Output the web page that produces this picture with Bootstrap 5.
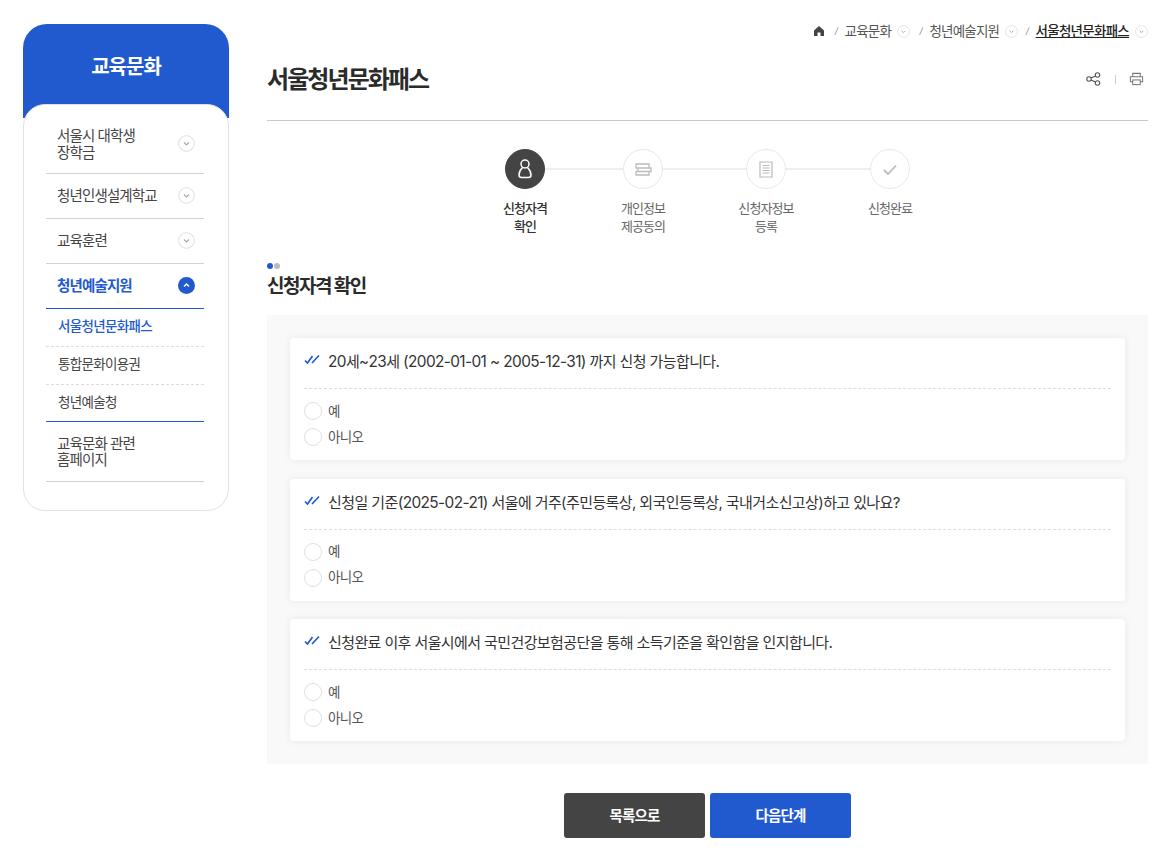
<!doctype html>
<html lang="ko"><head><meta charset="utf-8"><title>서울청년문화패스</title>
<link href="https://cdn.jsdelivr.net/npm/bootstrap@5.3.0/dist/css/bootstrap.min.css" rel="stylesheet">
<style>
html,body{height:849px;overflow:hidden}
body{font-family:Inter,"Noto Sans CJK KR","Noto Sans",sans-serif;color:#333;background:#fff;letter-spacing:-.05em;font-size:14px}
.shell{padding:24px 26px 0 23px;gap:38px}
.side{width:206px;flex:none}
.side-head{height:94px;background:#2159cf;border-radius:24px 24px 0 0;color:#fff;font-size:20px;font-weight:700;text-align:center;padding-top:27px;line-height:32px;letter-spacing:-.05em}
.side-panel{height:407px;margin-top:-14px;position:relative;background:#fff;border:1px solid #e2e2e2;border-radius:22px;padding:8px 24px 0 22px}
.mi{display:flex;justify-content:space-between;align-items:center;padding:0 9px 1px 11px;border-bottom:1px solid #d2d2d2;color:#444;font-size:14.5px;line-height:16.5px;height:45px;letter-spacing:-.06em}
.mi>span{padding-top:2px}
.mi.two{height:61px;padding:1px 9px 0 11px}
.mi.last{height:60px;padding-bottom:1px}
.mi.on{color:#2159cf;font-weight:700;border-bottom-color:#2159cf}
.sub{display:block;height:38px;line-height:35px;padding-left:12px;color:#444;font-size:13.5px;border-bottom:1px dashed #ddd;letter-spacing:-.05em}
.sub.on{color:#2159cf;font-weight:500}
.sub.end{height:37px;border-bottom:1px solid #2159cf}
.chev{width:17px;height:17px;flex:none}
.main{width:881px;flex:none}
.crumb{height:14px;font-size:13.5px;line-height:14px;color:#555;gap:6px;white-space:nowrap;letter-spacing:-.06em}
.crumb b{font-weight:500;color:#222;text-decoration:underline;letter-spacing:-.055em}
.sl{color:#888;font-size:9px;margin:0 1.5px 0 3.5px;font-style:italic}
.sl.near{margin-left:1.5px}
.title-row{height:84px;margin-top:-1px;border-bottom:1px solid #c8c8c8;padding:25px 4px 0 0}
.title-row h1{font-size:24px;font-weight:700;color:#2b2b2b;line-height:36px;margin:0;letter-spacing:-.08em}
.tools{gap:13.5px;padding-top:10px}
.vr-mini{width:1px;height:9px;background:#ccc}
.steps{height:115px;position:relative}
.step{position:absolute;top:28px;width:90px;text-align:center;font-size:13px;line-height:17.5px;color:#666;letter-spacing:-.07em}
.step .cir{width:40px;height:40px;border-radius:50%;border:1px solid #e8e8e8;background:#fff;margin:0 auto 11px;display:flex;align-items:center;justify-content:center}
.step.on{color:#333;font-weight:500}
.step.on .cir{background:#444;border-color:#444}
.track{position:absolute;left:258px;width:365px;top:47px;height:2px;background:#eee}
.dots{gap:1px;height:6px;margin-top:27px}
.dots i{width:6px;height:6px;border-radius:50%;background:#2159cf;display:block}
.dots i+i{background:#bbb}
.subtitle{font-size:19px;font-weight:700;color:#2b2b2b;margin:0;line-height:30px;height:46px;padding-top:3px;letter-spacing:-.08em}
.panel-q{background:#f9f9f9;height:449px;padding:23px}
.qcard{height:122px;background:#fff;border-radius:4px;box-shadow:0 0 8px rgba(0,0,0,.07);padding:0 14px;margin-bottom:18.5px}
.qcard:last-child{margin-bottom:0}
.qhead{height:51px;border-bottom:1px dashed #ddd;display:flex;align-items:center;gap:8px;font-size:15px;color:#333;padding-bottom:2px;margin-bottom:9px;letter-spacing:-.04em}
.qhead svg{flex:none;margin-top:-2px;margin-bottom:4px}
.num{font-size:15.4px}
.opt{display:flex;align-items:center;gap:6px;height:26px;color:#555;font-size:13.5px}
.opt span.rd{width:18px;height:18px;border:1px solid #e0e0e0;border-radius:50%;background:#fff;display:block}
.acts{gap:5px;margin-top:29px}
.btn-a{width:141px;height:45px;border:0;border-radius:3px;font-size:14.5px;font-weight:700;color:#fff;background:#444;letter-spacing:-.06em;padding:0}
.btn-a:hover{background:#444;color:#fff}
.btn-b{background:#2159cf}
.btn-b:hover{background:#2159cf}
</style></head>
<body>
<svg width="0" height="0" class="d-block position-absolute">
<symbol id="cd" viewBox="0 0 17 17"><circle cx="8.5" cy="8.5" r="7.8" fill="#fff" stroke="#ddd" stroke-width="1"/><path d="M6 7.500l2.500 2.500L11 7.500" fill="none" stroke="#aaa" stroke-width="1.200"/></symbol>
<symbol id="ck" viewBox="0 0 16 10"><path d="M1 6.500l2.500 2.500L8.500 2M8 9l7-7.500" fill="none" stroke="#2159cf" stroke-width="1.700"/></symbol>
</svg>
<div class="shell d-flex align-items-start">
  <aside class="side">
    <div class="side-head">교육문화</div>
    <div class="side-panel">
      <div class="mi two"><span>서울시 대학생<br>장학금</span><svg class="chev"><use href="#cd"/></svg></div>
      <div class="mi"><span>청년인생설계학교</span><svg class="chev"><use href="#cd"/></svg></div>
      <div class="mi"><span>교육훈련</span><svg class="chev"><use href="#cd"/></svg></div>
      <div class="mi on"><span>청년예술지원</span><svg class="chev" viewBox="0 0 17 17"><circle cx="8.5" cy="8.5" r="8.5" fill="#2159cf"/><path d="M6 9.500L8.500 7l2.500 2.500" fill="none" stroke="#fff" stroke-width="1.500"/></svg></div>
      <a class="sub on text-decoration-none">서울청년문화패스</a>
      <a class="sub text-decoration-none">통합문화이용권</a>
      <a class="sub end text-decoration-none">청년예술청</a>
      <div class="mi last"><span>교육문화 관련<br>홈페이지</span></div>
    </div>
  </aside>
  <main class="main">
    <div class="crumb d-flex justify-content-end align-items-center">
      <svg width="12" height="12" viewBox="0 0 12 12"><path d="M6 1L1 5.500V11h3.500V7.500h3V11H11V5.500z" fill="#444"/></svg>
      <span class="sl">/</span><span>교육문화</span><svg width="13" height="13"><use href="#cd"/></svg>
      <span class="sl">/</span><span>청년예술지원</span><svg width="13" height="13"><use href="#cd"/></svg>
      <span class="sl near">/</span><b>서울청년문화패스</b><svg width="13" height="13"><use href="#cd"/></svg>
    </div>
    <div class="title-row d-flex justify-content-between align-items-start">
      <h1>서울청년문화패스</h1>
      <div class="tools d-flex align-items-center">
        <svg width="15" height="14" viewBox="0 0 15 14" fill="none" stroke="#555" stroke-width="1.100"><circle cx="3" cy="7" r="2.200"/><circle cx="11.500" cy="3" r="2.200"/><circle cx="11.500" cy="11" r="2.200"/><path d="M5 6l4.500-2M5 8l4.500 2"/></svg>
        <span class="vr-mini"></span>
        <svg width="15" height="14" viewBox="0 0 16 14" fill="none" stroke="#777" stroke-width="1.100"><path d="M4 4V1h8v3M4 10H1.500V4.500h13V10H12"/><rect x="4" y="8" width="8" height="5"/></svg>
      </div>
    </div>
    <div class="steps">
      <div class="track"></div>
      <div class="step on" style="left:213px"><div class="cir"><svg width="14" height="20" viewBox="0 0 14 20" fill="none" stroke="#fff" stroke-width="1.500"><circle cx="7" cy="5" r="4"/><path d="M4.500 8.500C2.500 10.500 1 13 1 16c0 1.500 1 2.500 2.500 2.500h7c1.500 0 2.500-1 2.500-2.500 0-3-1.500-5.500-3.500-7.500"/></svg></div>신청자격<br>확인</div>
      <div class="step" style="left:331px"><div class="cir"><svg width="17" height="13" viewBox="0 0 17 13" fill="none" stroke="#bbb" stroke-width="1.300"><path d="M1 1h13v4H1zM3 5h13v3.500H3zM1 8.500h13V12H1z"/></svg></div>개인정보<br>제공동의</div>
      <div class="step" style="left:454px"><div class="cir"><svg width="14" height="17" viewBox="0 0 14 17" fill="none" stroke="#bbb" stroke-width="1.200"><path d="M1 1h12v15H1zM3.500 4.500h7M3.500 7h7M3.500 9.500h7M3.500 12h7"/></svg></div>신청자정보<br>등록</div>
      <div class="step" style="left:578px"><div class="cir"><svg width="14" height="11" viewBox="0 0 14 11" fill="none" stroke="#bbb" stroke-width="1.800"><path d="M1 6l4 4 8-8.500"/></svg></div>신청완료</div>
    </div>
    <div class="dots d-flex"><i></i><i></i></div>
    <h2 class="subtitle">신청자격 확인</h2>
    <div class="panel-q">
      <div class="qcard">
        <div class="qhead"><svg width="16" height="10"><use href="#ck"/></svg><span><span class="num">20</span>세~<span class="num">23</span>세 <span class="num">(2002-01-01 ~ 2005-12-31)</span> 까지 신청 가능합니다.</span></div>
        <div class="opt"><span class="rd"></span><span>예</span></div>
        <div class="opt"><span class="rd"></span><span>아니오</span></div>
      </div>
      <div class="qcard">
        <div class="qhead"><svg width="16" height="10"><use href="#ck"/></svg><span>신청일 기준<span class="num">(2025-02-21)</span> 서울에 거주(주민등록상, 외국인등록상, 국내거소신고상)하고 있나요?</span></div>
        <div class="opt"><span class="rd"></span><span>예</span></div>
        <div class="opt"><span class="rd"></span><span>아니오</span></div>
      </div>
      <div class="qcard">
        <div class="qhead"><svg width="16" height="10"><use href="#ck"/></svg><span>신청완료 이후 서울시에서 국민건강보험공단을 통해 소득기준을 확인함을 인지합니다.</span></div>
        <div class="opt"><span class="rd"></span><span>예</span></div>
        <div class="opt"><span class="rd"></span><span>아니오</span></div>
      </div>
    </div>
    <div class="acts d-flex justify-content-center">
      <button type="button" class="btn btn-a">목록으로</button>
      <button type="button" class="btn btn-a btn-b">다음단계</button>
    </div>
  </main>
</div>
<script src="https://cdn.jsdelivr.net/npm/bootstrap@5.3.0/dist/js/bootstrap.bundle.min.js"></script>
</body></html>
